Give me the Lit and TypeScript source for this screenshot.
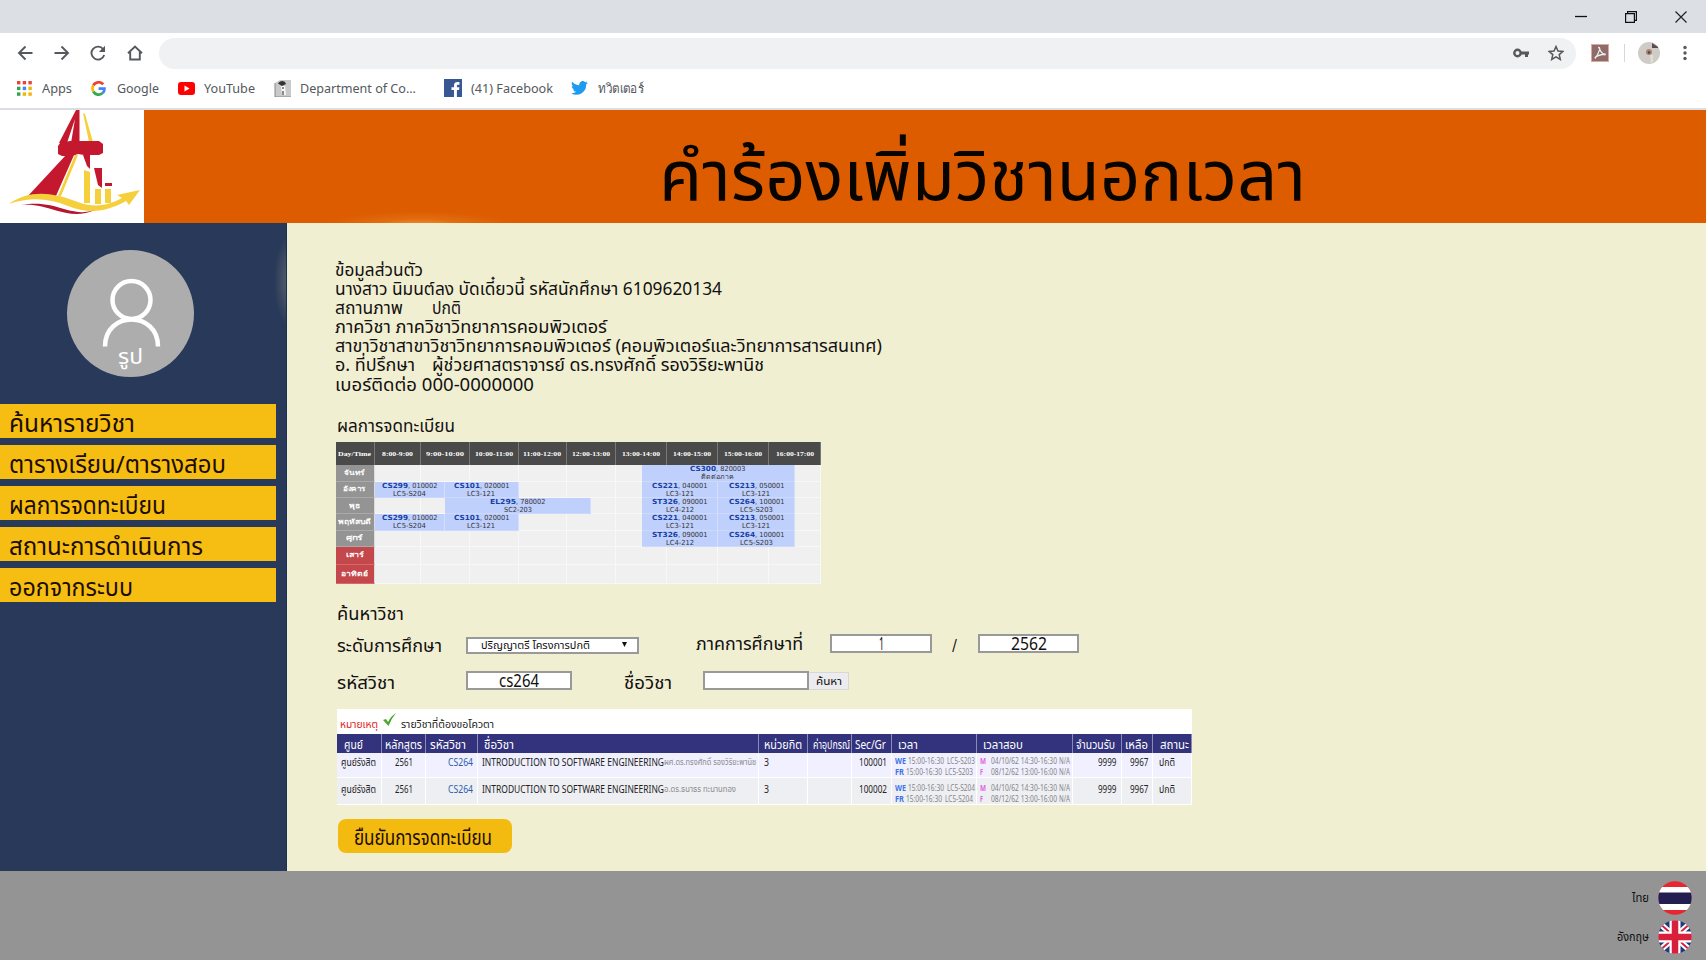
import { LitElement, html, css, svg } from "lit";
import { customElement } from "lit/decorators.js";

/** Text set in one line and condensed or widened to an exact width. */
@customElement("fit-text")
class FitText extends LitElement {
  static properties = { text: {}, w: { type: Number } };
  declare text: string;
  declare w: number;
  static styles = css`
    :host { display: block; white-space: pre; flex: none; }
    span { display: inline-block; transform-origin: 0 50%; vertical-align: top; }
  `;
  render() {
    return html`<span>${this.text}</span>`;
  }
  updated() {
    this.style.width = this.w + "px";
    const s = this.renderRoot.querySelector("span") as HTMLElement;
    const natural = s.getBoundingClientRect().width;
    if (natural > 0) s.style.transform = `scaleX(${this.w / natural})`;
  }
}

const t = (text: string, w: number, cls = "") =>
  html`<fit-text class=${cls} .text=${text} .w=${w}></fit-text>`;

const hours = ["8:00-9:00", "9:00-10:00", "10:00-11:00", "11:00-12:00", "12:00-13:00", "13:00-14:00", "14:00-15:00", "15:00-16:00", "16:00-17:00"];
const days: [string, number][] = [["จันทร์", 21], ["อังคาร", 23], ["พุธ", 11], ["พฤหัสบดี", 33], ["ศุกร์", 17], ["เสาร์", 18], ["อาทิตย์", 27]];
// [day row, first half-hour column, end column, course, section, room]
const lessons: [number, number, number, string, string, string][] = [
  [0, 11, 18, "CS300", "820003", "ติดต่อภาค"],
  [1, 0, 3, "CS299", "010002", "LC5-S204"],
  [1, 3, 6, "CS101", "020001", "LC3-121"],
  [1, 11, 14, "CS221", "040001", "LC3-121"],
  [1, 14, 17, "CS213", "050001", "LC3-121"],
  [2, 3, 9, "EL295", "780002", "SC2-203"],
  [2, 11, 14, "ST326", "090001", "LC4-212"],
  [2, 14, 17, "CS264", "100001", "LC5-S203"],
  [3, 0, 3, "CS299", "010002", "LC5-S204"],
  [3, 3, 6, "CS101", "020001", "LC3-121"],
  [3, 11, 14, "CS221", "040001", "LC3-121"],
  [3, 14, 17, "CS213", "050001", "LC3-121"],
  [4, 11, 14, "ST326", "090001", "LC4-212"],
  [4, 14, 17, "CS264", "100001", "LC5-S203"],
];
lessons[0][2] = 17;

const heads: [string, number, number][] = [
  ["ศูนย์", 19, 7], ["หลักสูตร", 37, 3], ["รหัสวิชา", 36, 4.5], ["ชื่อวิชา", 30, 6.5], ["หน่วยกิต", 38, 5.5], ["ค่าอุปกรณ์", 37, 5],
  ["Sec/Gr", 31, 3], ["เวลา", 20, 6], ["เวลาสอบ", 40, 6], ["จำนวนรับ", 39, 3.5], ["เหลือ", 23, 3.5], ["สถานะ", 29, 7],
];
const rows = [
  { teacher: "ผศ.ดร.ทรงศักดิ์ รองวิริยะพานิช", tw: 92, sec: "100001", room: "LC5-S203" },
  { teacher: "อ.ดร.ธนาธร ทะนานทอง", tw: 72, sec: "100002", room: "LC5-S204" },
];

const chrome = {
  back: svg`<path d="M15.5 8H2M8.5 1.5L2 8l6.500 6.500" />`,
  fwd: svg`<path d="M.5 8H14M7.500 1.500L14 8l-6.500 6.500" />`,
  reload: svg`<path d="M13.200 4.200A6.500 6.500 0 1 0 14.200 10" /><path d="M15 .8v6.200H8.800z" fill="#55585c" stroke="none" />`,
  home: svg`<path d="M1 8.300L8 1.500l7 6.800M3.200 7v7.500h9.600V7" />`,
};

@customElement("app-root")
class AppRoot extends LitElement {
  static styles = css`
    :host { display: block; width: 1706px; height: 960px; overflow: hidden; background: #fff; color: #111; font-family: "Noto Sans", "Noto Sans Thai", sans-serif; }
    * { box-sizing: border-box; }
    svg { display: block; flex: none; }
    .row { display: flex; align-items: flex-start; }
    .title { height: 33px; background: #dcdfe4; display: flex; justify-content: flex-end; align-items: center; gap: 38px; padding: 0 19px 0 0; }
    .tools { height: 40px; display: flex; align-items: center; padding: 0 0 0 17px; }
    .tools .nav { margin-right: 20.500px; }
    .nav { stroke: #55585c; stroke-width: 1.900; fill: none; }
    .omni { width: 1417px; height: 31px; border-radius: 16px; background: #eff1f3; margin-left: -4px; display: flex; align-items: center; justify-content: flex-end; gap: 19px; padding-right: 12px; }
    .acro { margin-left: 15px; }
    .sep { width: 1px; height: 18px; background: #d5d7da; margin: 0 13px 0 15px; }
    .dots { margin-left: 23px; }
    .marks { height: 37px; display: flex; align-items: center; padding: 0 0 5px 17px; font: 13px/20px "Noto Sans", sans-serif; color: #55585c; border-bottom: 2px solid #dadde2; }
    .head { height: 113px; display: flex; }
    .logo { width: 144px; height: 113px; background: #fff; }
    .banner { flex: 1; padding: 0 0 0 515px; background: radial-gradient(ellipse 95px 16px at 275px 117px, #f0a04a 0%, #e47a1c88 50%, transparent 100%), #dd5c00; color: #080400; font-size: 69px; line-height: 126px; }
    .body { height: 648px; display: flex; }
    .side { width: 287px; background: radial-gradient(ellipse 16px 46px at 290px 58px, #5b6470, transparent), #293959; border-right: 1px solid #1c3054; }
    .avatar { margin: 27px 0 0 67px; height: 127px; width: 127px; border-radius: 50%; background: #adadad; display: grid; grid-template-columns: 127px; }
    .avatar > * { grid-area: 1 / 1; }
    .avatar fit-text { color: #fff; font-size: 21px; line-height: 30px; margin: 91px 0 0 51px; }
    .menu { margin-top: 27px; display: flex; flex-direction: column; gap: 7px; }
    .item { width: 275.500px; height: 34px; background: #f6bd12; padding-left: 9px; font-size: 24px; line-height: 37px; color: #1c0d00; overflow: hidden; }
    .main { flex: 1; background: #f1efd2; padding: 37px 0 0 48px; font-size: 18px; }
    .info { line-height: 19.100px; }
    .sec { line-height: 22px; padding-left: 2px; }
    .sched { display: grid; width: 485px; margin: 6px 0 0 1px; background: #f0f0f0; grid-template-rows: 23.500px 16.500px 16.500px 16px 16.500px 16px 18.500px 18.500px; grid-template-columns: 38.500px 23.250px 23.250px 24.250px 24.250px 24.500px 24.700px 24px 24.300px 24.500px 24.500px 25.700px 25.800px 25.500px 25.500px 25.500px 25.500px 25.700px 25.800px; }
    .th { background: #4a4a4a; color: #fff; font: bold 6.500px/24px "Liberation Serif", serif; display: flex; justify-content: center; border-right: 1px solid #777; }
    .day { background: #949494; color: #fff; font: bold 7px/16px "Noto Sans", sans-serif; display: flex; justify-content: center; align-items: center; border-bottom: 1px solid #aaa; border-right: 1px solid #ddd; }
    .day.we { background: #c4474b; border-bottom-color: #d66; }
    .slot { border-right: 1px solid #f8f8f8; border-bottom: 1px solid #f8f8f8; }
    .lesson { background: #bfd0fd; border-right: 1px solid #d5defa; font: 7px/8px "DejaVu Sans", "Noto Sans", sans-serif; color: #333; display: flex; flex-direction: column; align-items: center; border-bottom: 1px solid #cdd9fb; overflow: hidden; }
    .link { color: #173fa5; font-weight: bold; text-decoration: underline; }
    .box { background: #fff; border: 2px solid #999; display: flex; justify-content: center; font-size: 18px; line-height: 14px; flex: none; }
    .select { font-size: 10px; line-height: 12px; justify-content: flex-start; padding-left: 13px; }
    .arrow { margin: 3px 0 0 32px; }
    .go { width: 40px; height: 18px; background: #ecebee; border: 1px solid #d8d8d8; border-left: 0; font-size: 10px; line-height: 16px; padding-left: 7px; margin-top: 1px; }
    .lbl { line-height: 22px; }
    .res { width: 854.500px; margin: 18.500px 0 0 2px; background: #fff; color: #222; }
    .note { height: 24.500px; padding-left: 3px; font-size: 11px; line-height: 29px; }
    .note .red { color: #e02020; text-decoration: underline; }
    .cols { display: grid; grid-template-columns: 45px 43.500px 52px 281px 49.500px 44px 40px 85px 95.500px 49px 31.500px 38.500px; }
    .cols > div { border-right: 1px solid #fff; overflow: hidden; }
    .hd { height: 19px; background: #33337d; color: #fff; font-size: 13px; line-height: 21px; }
    .hd > div { border-color: #8a8ab8; }
    .tr { height: 25.500px; border-bottom: 1px solid #fff; background: #f0f0fe; font-size: 10.500px; line-height: 18px; }
    .tr.alt { height: 27px; background: #eeeff3; }
    .tr.alt > div { padding-top: 1.500px; }
    .r { display: flex; justify-content: flex-end; padding-right: 4px; }
    .blue { color: #2d5cae; text-decoration: underline; }
    .gray { color: #8a8a8a; font-size: 8px; }
    .sub { display: flex; gap: 2.500px; font-size: 8px; line-height: 11px; color: #858585; padding: 0 0 0 2.500px; }
    .first { padding-top: 2px; }
    .wd { color: #3f72ea; font-weight: bold; }
    .pk { color: #dd66dd; font-weight: bold; }
    .u { text-decoration: underline; }
    .confirm { margin: 14px 0 0 3px; width: 174px; height: 34px; border-radius: 8px; background: #f3ba10; padding-left: 16px; font-size: 21px; line-height: 36px; color: #1c0d00; }
    .foot { height: 89px; background: #949494; display: flex; flex-direction: column; align-items: flex-end; padding: 10px 14px 0 0; gap: 5px; font-size: 13px; }
    .lang { display: flex; gap: 9px; height: 34px; align-items: center; }
  `;

  lesson(l: (typeof lessons)[number]) {
    const [d, a, b, code, sec, room] = l;
    return html`<div class="lesson" style="grid-row:${d + 2};grid-column:${a + 2} / ${b + 2}">
      <div class="row">${t(code, 26, "link")}${t(", " + sec, 29.500)}</div>
      ${t(room, room.length > 7 ? 33 : 28)}
    </div>`;
  }

  renderChrome() {
    const nav = (p: unknown) => html`<svg class="nav" width="16" height="16" viewBox="0 0 16 16">${p}</svg>`;
    return html`
      <div class="title">
        <svg width="12" height="12"><path d="M0 5.500H12" stroke="#111" stroke-width="1.300" /></svg>
        <svg width="12" height="12" fill="none" stroke="#111" stroke-width="1.200"><path d="M.6 2.600h8.800v8.800H.6zM2.600 2.600V.6h8.800v8.800H9.400" /></svg>
        <svg width="12" height="12" stroke="#222" stroke-width="1.200"><path d="M.5.5l11 11M11.500.5l-11 11" /></svg>
      </div>
      <div class="tools">
        ${nav(chrome.back)}${nav(chrome.fwd)}${nav(chrome.reload)}${nav(chrome.home)}
        <div class="omni">
          <svg width="16" height="10" fill="none" stroke="#55585c"><circle cx="4.500" cy="5" r="3.200" stroke-width="2.400" /><path d="M7.500 5H16M13.500 5v4" stroke-width="3" /></svg>
          <svg width="16" height="16" viewBox="0 0 16 16" fill="none" stroke="#55585c" stroke-width="1.500"><path d="M8 1.500l2 4.500 4.900.4-3.700 3.200 1.100 4.800L8 11.900l-4.300 2.500 1.100-4.800L1.100 6.400 6 6z" /></svg>
        </div>
        <svg class="acro" width="18" height="18"><rect width="18" height="18" fill="#8c6d6a" stroke="#e0a79e" stroke-width="2" /><path d="M7.800 3.500c1.800 0 .8 4-3.300 10.500-1.500 0 1-3 9.500-4 .8 1.800-3 1.200-6.200-6.500z" fill="none" stroke="#eee" stroke-width="1.300" /></svg>
        <div class="sep"></div>
        <svg width="22" height="22"><circle cx="11" cy="11" r="11" fill="#cfcbc7" /><path d="M14 1l6 4v1h-6z" fill="#5b4a50" /><circle cx="11" cy="10" r="3" fill="#a98772" /><circle cx="11" cy="10.500" r="1.300" fill="#5d3c33" /><path d="M12 13l3 0v7l-2 1z" fill="#e4ddd5" /></svg>
        <svg class="dots" width="4" height="16" fill="#55585c"><circle cx="2" cy="2.500" r="1.700" /><circle cx="2" cy="8" r="1.700" /><circle cx="2" cy="13.500" r="1.700" /></svg>
      </div>
      <div class="marks">
        <svg width="15" height="15">${[0, 1, 2, 3, 4, 5, 6, 7, 8].map((i) => svg`<rect x=${(i % 3) * 5.7} y=${Math.floor(i / 3) * 5.7} width="3.400" height="3.400" fill=${["#e8453c", "#e8453c", "#e8453c", "#31a552", "#4587f4", "#f2b50c", "#31a552", "#f2b50c", "#f2b50c"][i]} />`)}</svg>
        <span class="row" style="padding:0 19px 0 10px">${t("Apps", 30)}</span>
        <svg width="15" height="15" viewBox="0 0 15 15" fill="none" stroke-width="2.700"><path d="M12.200 3.400A6 6 0 0 0 2.300 4.500" stroke="#ea4335" /><path d="M2.300 4.500a6 6 0 0 0 0 6" stroke="#fbbc05" /><path d="M2.300 10.500a6 6 0 0 0 9.300 1.600" stroke="#34a853" /><path d="M11.600 12.100A6 6 0 0 0 13.500 7.600H7.600" stroke="#4285f4" /></svg>
        <span class="row" style="padding:0 19px 0 11px">${t("Google", 42)}</span>
        <svg width="17" height="13"><rect width="17" height="13" rx="3" fill="#f00" /><path d="M6.500 3.500v6l5-3z" fill="#fff" /></svg>
        <span class="row" style="padding:0 19px 0 9px">${t("YouTube", 51)}</span>
        <svg width="17" height="17"><path d="M1 3l5-3h11v17H1z" fill="#c9c9c9" /><path d="M4 3.500C6 0 11 0 12 4L8 6z" fill="#333" /><path d="M7 6l4 0 1 9H8z" fill="#f6f6f6" /><path d="M9 7v2M9 11v4" stroke="#555" stroke-width="1.300" /><path d="M1 3v14h16" fill="none" stroke="#888" /></svg>
        <span class="row" style="padding:0 28px 0 9px">${t("Department of Co...", 116)}</span>
        <svg width="18" height="18"><rect width="18" height="18" fill="#3a5795" /><path d="M10 18v-7H7.500V8.300H10V6.500C10 3.800 11.500 2.800 15.500 3.200v2.500c-2-.1-2.600 0-2.600 1.300v1.300h2.500l-.4 2.700h-2.100v7z" fill="#fff" /></svg>
        <span class="row" style="padding:0 18px 0 9px">${t("(41) Facebook", 82)}</span>
        <svg width="17" height="14" viewBox="0 0 24 20"><path d="M24 2.400a10 10 0 0 1-2.800.8A5 5 0 0 0 23.300.5a10 10 0 0 1-3.100 1.200A4.900 4.900 0 0 0 11.800 6.200 14 14 0 0 1 1.700 1a4.900 4.900 0 0 0 1.500 6.600A5 5 0 0 1 1 7a4.900 4.900 0 0 0 3.900 4.900 5 5 0 0 1-2.200.1 4.900 4.900 0 0 0 4.600 3.400A10 10 0 0 1 0 17.400 14 14 0 0 0 21.500 4.900 10 10 0 0 0 24 2.400z" fill="#1d9bf0" /></svg>
        <span class="row" style="padding-left:10px">${t("ทวิตเตอร์", 46)}</span>
      </div>`;
  }

  render() {
    const menu: [string, number][] = [["ค้นหารายวิชา", 126], ["ตารางเรียน/ตารางสอบ", 217], ["ผลการจดทะเบียน", 157], ["สถานะการดำเนินการ", 194], ["ออกจากระบบ", 124]];
    return html`
      ${this.renderChrome()}
      <div class="head">
        <svg class="logo" width="144" height="113" viewBox="0 0 144 113">
          <path d="M76 0h3.500v33H59z" fill="#c4182f" /><path d="M75 9l-4 24h-4z" fill="#fff" />
          <path d="M83 3l2 1 8 28h-4z" fill="#f5d03c" />
          <path d="M60 33l10-2h29l4 3v9l-4 2H84l-6-1-6 2H62l-4-2v-8z" fill="#c4182f" />
          <path d="M66 45h8L56 86l-29 1z" fill="#c4182f" /><path d="M75 45h3L61 86h-3z" fill="#f5d03c" />
          <path d="M83 45h7v14l-3-3z" fill="#c4182f" /><path d="M94 58h8v20l-4-3z" fill="#c4182f" /><path d="M105 73h7v3h-7z" fill="#c4182f" />
          <path d="M84 60l6 2v31h-6zM95 79h6v15h-6zM105 79h6v14h-6z" fill="#f5d03c" />
          <path d="M9 94C30 79 53 83 75 91c20 8 34 4 47-3l-5-3 23-5-11 15-3-4c-18 10-36 14-58 5C48 88 30 87 9 94z" fill="#f5d03c" />
          <path d="M21 95c18-3 30 0 43 4 14 4 21 4 31 1-13 6-27 4-37 1-14-4-23-7-37-6z" fill="#b5152f" />
        </svg>
        <div class="banner">${t("คำร้องเพิ่มวิชานอกเวลา", 647)}</div>
      </div>
      <div class="body">
        <div class="side">
          <div class="avatar">
            <svg width="127" height="127" fill="none" stroke="#fff" stroke-width="4.500"><circle cx="64.500" cy="50" r="19" /><path d="M38 96.500C38 60.500 91 60.500 91 96.500" /></svg>
            ${t("รูป", 25)}
          </div>
          <div class="menu">${menu.map(([s, w]) => html`<div class="item">${t(s, w)}</div>`)}</div>
        </div>
        <div class="main">
          <div class="info">
            ${t("ข้อมูลส่วนตัว", 88)}
            ${t("นางสาว นิมนต์ลง บัดเดี๋ยวนี้ รหัสนักศึกษา 6109620134", 387)}
            <div class="row" style="gap:29px">${t("สถานภาพ", 68)}${t("ปกติ", 29)}</div>
            ${t("ภาควิชา ภาควิชาวิทยาการคอมพิวเตอร์", 272)}
            ${t("สาขาวิชาสาขาวิชาวิทยาการคอมพิวเตอร์ (คอมพิวเตอร์และวิทยาการสารสนเทศ)", 547)}
            <div class="row" style="gap:17px">${t("อ. ที่ปรึกษา", 80)}${t("ผู้ช่วยศาสตราจารย์ ดร.ทรงศักดิ์ รองวิริยะพานิช", 332)}</div>
            ${t("เบอร์ติดต่อ 000-0000000", 199)}
          </div>
          <div class="sec" style="padding-top:20px">${t("ผลการจดทะเบียน", 118)}</div>
          <div class="sched">
            <div class="th">${t("Day/Time", 33)}</div>
            ${hours.map((h, i) => html`<div class="th" style="grid-column:span 2">${t(h, i ? 38 : 31)}</div>`)}
            ${days.map(([d, w], r) => html`
              <div class="day ${r > 4 ? "we" : ""}" style="grid-row:${r + 2};grid-column:1">${t(d, w)}</div>
              ${hours.map((_, c) => html`<div class="slot" style="grid-row:${r + 2};grid-column:${c * 2 + 2} / span 2"></div>`)}`)}
            ${lessons.map((l) => this.lesson(l))}
          </div>
          <div class="sec" style="padding-top:18px">${t("ค้นหาวิชา", 67)}</div>
          <div class="row sec" style="padding-top:10px;height:47px">
            ${t("ระดับการศึกษา", 105)}
            <div class="box select" style="width:173px;height:17px;margin:3px 0 0 24px">${t("ปริญญาตรี โครงการปกติ", 109)}<svg class="arrow" width="5" height="5"><path d="M0 0h5L2.500 5z" fill="#111" /></svg></div>
            <div style="margin:-2px 27px 0 57px">${t("ภาคการศึกษาที่", 107)}</div>
            <div class="box" style="width:102px;height:19px">${t("1", 5)}</div>
            <div style="margin:0 21px 0 20px">${t("/", 5)}</div>
            <div class="box" style="width:101px;height:19px">${t("2562", 36)}</div>
          </div>
          <div class="row sec" style="height:20px">
            <div>${t("รหัสวิชา", 58)}</div>
            <div class="box" style="width:106px;height:19px;margin-left:71px">${t("cs264", 40)}</div>
            <div style="margin:0 31px 0 52px">${t("ชื่อวิชา", 48)}</div>
            <div class="box" style="width:106px;height:19px"></div>
            <div class="go">${t("ค้นหา", 26)}</div>
          </div>
          <div class="res">
            <div class="note row">${t("หมายเหตุ", 38, "red")}<svg width="14" height="14" style="margin:4px 4px 0 5px"><path d="M0 7l3-1 2 3Q8 3 13 0 8 6 5.500 13z" fill="#4aa82e" /></svg>${t("รายวิชาที่ต้องขอโควตา", 93)}</div>
            <div class="cols hd">${heads.map(([s, w, p]) => html`<div style="padding-left:${p}px">${t(s, w)}</div>`)}</div>
            ${rows.map((r, i) => html`<div class="cols tr ${i ? "alt" : ""}">
              <div style="padding-left:4px">${t("ศูนย์รังสิต", 35)}</div>
              <div style="padding-left:13px">${t("2561", 18)}</div>
              <div class="r">${t("CS264", 25, "blue")}</div>
              <div class="row" style="padding-left:4.500px">${t("INTRODUCTION TO SOFTWARE ENGINEERING", 182)}${t(r.teacher, r.tw, "gray")}</div>
              <div style="padding-left:5.500px">${t("3", 5)}</div><div></div>
              <div class="r">${t(r.sec, 28)}</div>
              <div>
                <div class="sub first">${t("WE", 11, "wd")}${t("15:00-16:30", 36)}${t(r.room, 28, "u")}</div>
                <div class="sub">${t("FR", 9, "wd")}${t("15:00-16:30", 36)}${t(r.room, 28, "u")}</div>
              </div>
              <div>
                <div class="sub first">${t("M", 6, "pk")}<span></span>${t("04/10/62 14:30-16:30", 66)}${t("N/A", 11, "u")}</div>
                <div class="sub">${t("F", 3, "pk")}<span style="width:3px"></span>${t("08/12/62 13:00-16:00", 66)}${t("N/A", 11, "u")}</div>
              </div>
              <div class="r">${t("9999", 18.500)}</div><div class="r">${t("9967", 18.500)}</div>
              <div style="padding-left:6px">${t("ปกติ", 16)}</div>
            </div>`)}
          </div>
          <div class="confirm">${t("ยืนยันการจดทะเบียน", 138)}</div>
        </div>
      </div>
      <div class="foot">
        <div class="lang">${t("ไทย", 17)}<svg width="34" height="34" viewBox="0 0 34 34"><clipPath id="a"><circle cx="17" cy="17" r="16.800" /></clipPath><g clip-path="url(#a)"><path d="M0 0h34v34H0z" fill="#e8262f" /><path d="M0 6h34v23H0z" fill="#fff" /><path d="M0 11.500h34V23H0z" fill="#241d4f" /></g></svg></div>
        <div class="lang">${t("อังกฤษ", 32)}<svg width="34" height="34" viewBox="0 0 34 34"><clipPath id="b"><circle cx="17" cy="17" r="16.800" /></clipPath><g clip-path="url(#b)"><path d="M0 0h34v34H0z" fill="#1d3a7c" /><path d="M0 2l34 30M34 2L0 32" stroke="#fff" stroke-width="6" /><path d="M0 2l34 30M34 2L0 32" stroke="#d9203a" stroke-width="2" /><path d="M17 0v34M0 17h34" stroke="#fff" stroke-width="11" /><path d="M17 0v34M0 17h34" stroke="#d9203a" stroke-width="6.500" /></g></svg></div>
      </div>`;
  }
}
